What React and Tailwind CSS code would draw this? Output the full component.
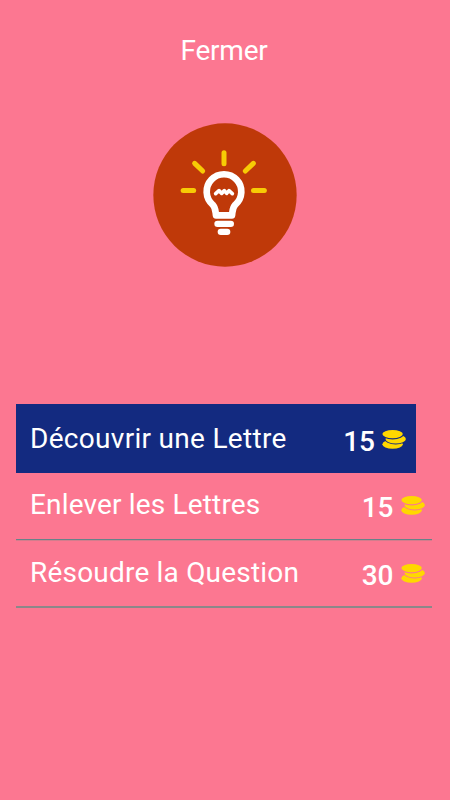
import React from 'react';
import clsx from 'clsx';

const hints = [
  { label: 'Découvrir une Lettre', price: 15, className: 'mr-4 h-[69px] bg-[#132a80] pt-[18px] pr-2.5 tracking-[0.3px]' },
  {
    label: 'Enlever les Lettres',
    price: 15,
    className: 'h-[67px] border-b border-[#668389] pt-[15px] pr-[7.5px] tracking-[0.16px] shadow-[0_1px_0_#d27e8d]',
  },
  {
    label: 'Résoudre la Question',
    price: 30,
    className: 'h-[68px] border-b-2 border-[#8c8789] pt-4 pr-[7.5px] tracking-[0.2px]',
  },
];

// Stack of three coins, each one cut out by the coin lying over it
const CoinsIcon = ({ className }) => (
  <svg viewBox="0 0 24 19" className={className} fill="#ffd800">
    <mask id="coin-middle">
      <rect width="24" height="19" fill="#fff" />
      <ellipse cx="10.6" cy="4.1" rx="11.6" ry="5.3" fill="#000" />
    </mask>
    <mask id="coin-bottom">
      <rect width="24" height="19" fill="#fff" />
      <ellipse cx="13.7" cy="8.9" rx="11.4" ry="5.6" fill="#000" />
    </mask>
    <ellipse cx="10.6" cy="4.1" rx="10.2" ry="4.1" />
    <ellipse cx="13.7" cy="8.9" rx="10.2" ry="4.6" mask="url(#coin-middle)" />
    <ellipse cx="10.6" cy="14.3" rx="10.2" ry="4.5" mask="url(#coin-bottom)" />
  </svg>
);

const BulbIcon = ({ className }) => (
  <svg viewBox="24 24 432 432" className={className} fill="none">
    <circle cx="240" cy="240" r="215" fill="#bf3909" />
    {/* Rays */}
    <g stroke="#f7cb05" strokeWidth="15" strokeLinecap="round">
      <path d="M237 113V146" />
      <path d="M149 145L173 168" />
      <path d="M325 145L301 168" />
      <path d="M114.500 226.500H146" />
      <path d="M325.500 226.500H358" />
    </g>
    {/* Glass */}
    <path
      d="M213 301C211 285 212 278 203 269A52 52 0 1 1 271 269C262 278 263 285 261 301Z"
      stroke="#fff"
      strokeWidth="20"
      strokeLinejoin="round"
    />
    {/* Filament */}
    <path
      d="M212 236L222 227L230 235L238 227L245 235L252 227L262 236"
      stroke="#fff"
      strokeWidth="11"
      strokeLinecap="round"
      strokeLinejoin="round"
    />
    {/* Socket */}
    <rect x="208" y="317" width="59" height="19" rx="9.5" fill="#fff" />
    <rect x="218" y="341" width="38" height="19" rx="9.5" fill="#fff" />
  </svg>
);

const HintRow = ({ label, price, className }) => (
  <li className={clsx('flex justify-between pl-[14px]', className)}>
    <span className="text-[28px] leading-[33px]">{label}</span>
    <span className="flex tracking-normal">
      <span className="mt-[3px] text-[28px] leading-[33px] font-medium">{price}</span>
      <CoinsIcon className="mt-2 ml-[7px] h-[19px] w-6" />
    </span>
  </li>
);

const App = () => {
  return (
    <div className="h-[800px] w-[450px] bg-[#fc7791] font-['Roboto',sans-serif] text-white">
      <div className="flex flex-col items-center pt-[34px]">
        <button className="mr-0.5 text-[28px] leading-[33px] tracking-[-0.2px]">Fermer</button>
        <BulbIcon className="mt-14 h-36 w-36" />
      </div>
      <ul className="mt-[137px] mr-[18px] ml-4">
        {hints.map((hint) => (
          <HintRow key={hint.label} {...hint} />
        ))}
      </ul>
    </div>
  );
};

export default App;
